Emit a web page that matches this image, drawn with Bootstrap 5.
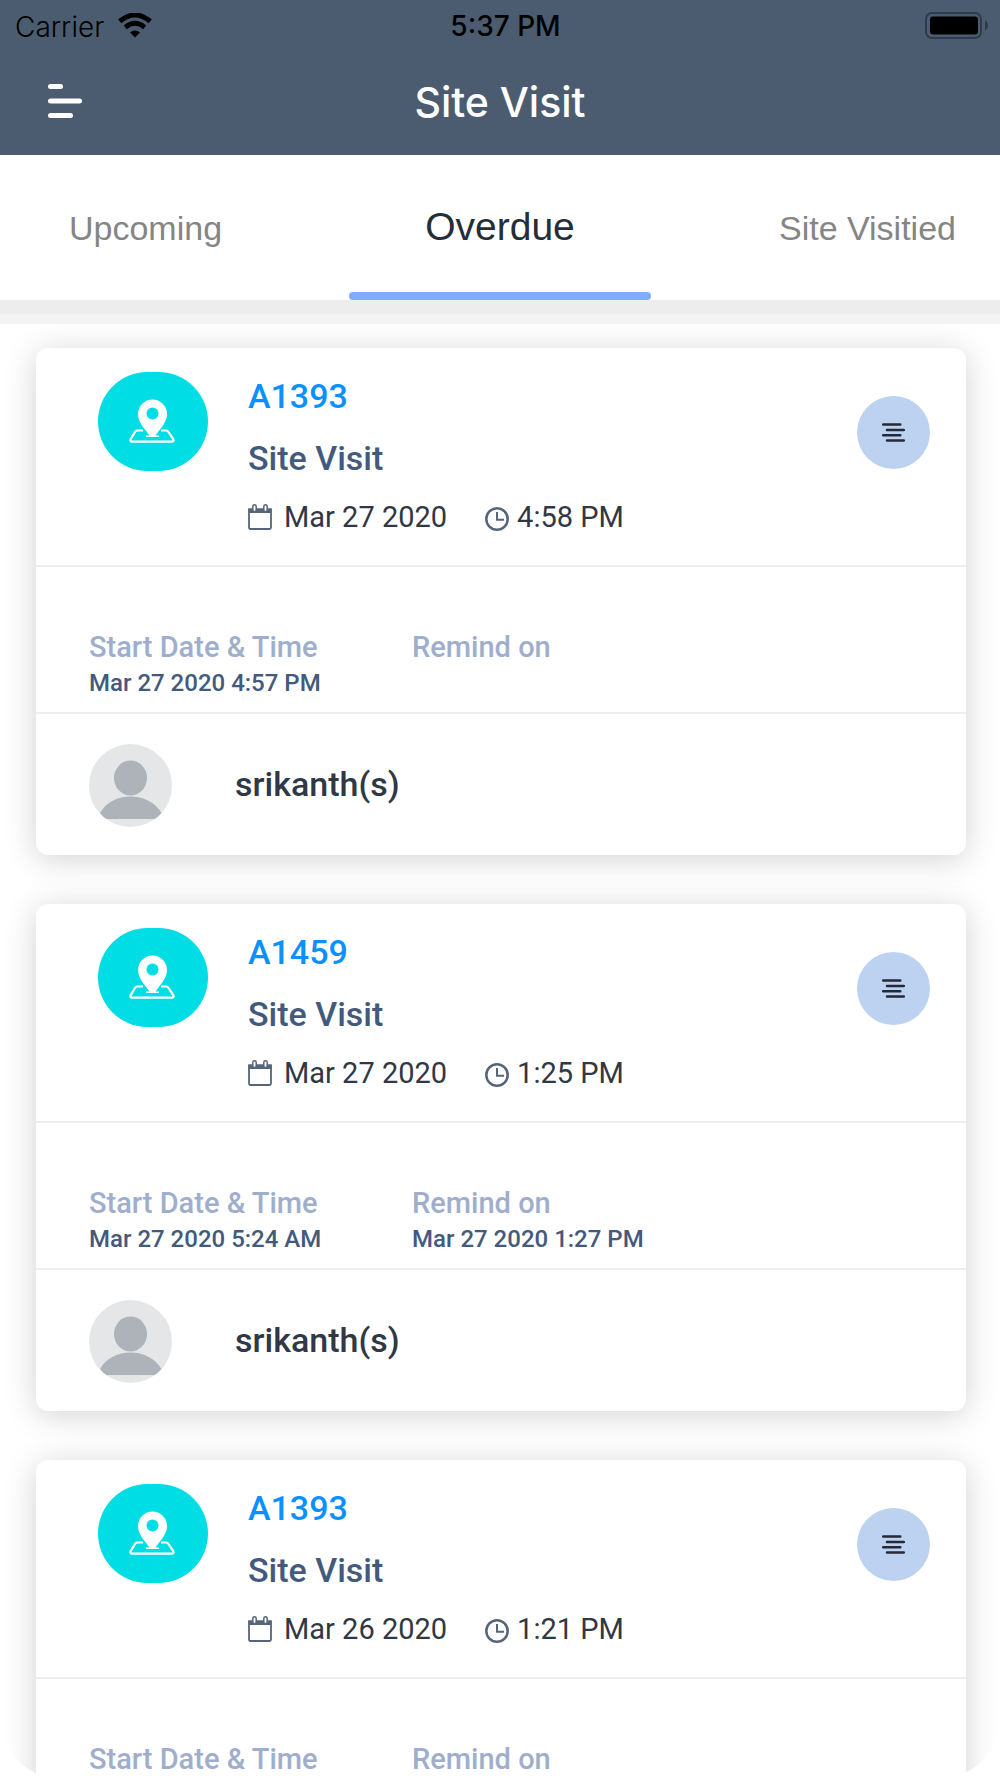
<!DOCTYPE html>
<html lang="en">
<head>
<meta charset="utf-8">
<meta name="viewport" content="width=device-width, initial-scale=1">
<title>Site Visit</title>
<link href="https://cdn.jsdelivr.net/npm/bootstrap@5.3.0/dist/css/bootstrap.min.css" rel="stylesheet">
<style>
body { font-family: Roboto, "Liberation Sans", sans-serif; background: #fff; color: #2f3844; }
.app-shell { border-radius: 0 0 60px 60px; }
.app-header { background: #4c5c70; font-family: Inter, "Liberation Sans", sans-serif; }
.status-bar { height: 50px; padding: 0 12px 0 15px; color: #000; font-size: 28px; line-height: 34px; }
.status-side { flex: 1 1 0; }
.carrier { font-weight: 300; }
.clock-text { font-weight: 500; padding: 2px 0 0 8px; }
.wifi { margin-left: 14px; }
.title-bar { height: 105px; padding: 0 48px 2px; }
.title-bar h1 { font-size: 41px; line-height: 48px; font-weight: 500; color: #fff; }
.title-side { flex: 1 1 0; }
.tab-strip { height: 145px; font-family: "Liberation Sans", Arial, sans-serif; }
.tab-link { border: 0; background: none; font-size: 34px; line-height: 40px; color: #858585; flex: 1 1 0; border-bottom: 8px solid transparent; padding: 8px 44px 0 69px; }
.tab-link.active { position: relative; flex: 0 0 302px; font-size: 39px; color: #252e38; padding: 6px 0 0; }
.tab-link.active::after { content: ""; position: absolute; left: 0; right: 0; bottom: -8px; height: 8px; border-radius: 4px; background: #80acff; }
.band { height: 24px; background: #f3f3f3; border-top: 14px solid #ededed; }
.visit-list { padding: 24px 34px 0 36px; gap: 49px; min-height: 0; }
.visit-card { flex: 0 0 auto; min-height: 507px; border: 0; border-radius: 12px; box-shadow: 0 4px 32px rgba(0,0,0,.18); }
.visit-top { padding: 24px 36px 31px 62px; border-bottom: 2px solid #eeeeee; }
.pin-badge { width: 110px; height: 99px; border-radius: 50px; background: #00dde4; margin-right: 40px; padding: 0 2px 2px 0; flex: none; }
.visit-info { gap: 22px; padding-top: 4px; }
.visit-code, .visit-kind { font-size: 34px; line-height: 40px; font-weight: 500; }
.visit-code { color: #0a90ff; text-decoration: none; }
.visit-kind { color: #435a7d; }
.visit-when { font-size: 29px; line-height: 34px; }
.when-date { gap: 12px; margin-right: 38px; }
.when-time { gap: 8px; }
.when-time svg { margin-top: 4px; }
.more-btn { width: 73px; height: 73px; border: 0; border-radius: 50%; background: #bdd2f0; margin-top: 24px; flex: none; }
.visit-dates { padding: 62px 53px 11px; border-bottom: 2px solid #eeeeee; }
.date-cell { width: 323px; line-height: 36px; }
.date-cell dt { font-size: 29px; font-weight: 500; color: #a0aecd; }
.date-cell dd { font-size: 24px; font-weight: 500; color: #435a7d; min-height: 36px; }
.visit-owner { padding: 30px 53px 28px; gap: 63px; font-size: 34px; line-height: 40px; font-weight: 500; }
.visit-owner span { padding-bottom: 4px; }
</style>
</head>
<body>
<svg class="d-none" aria-hidden="true">
  <symbol id="pin" viewBox="0 0 46 44">
    <path d="M14 31.500H8.500Q6.700 31.500 6 33L1.600 40.300Q.900 42.700 3.200 42.700H42.800Q45.100 42.700 44.400 40.300L39.500 33Q38.700 31.500 37 31.500H32" fill="none" stroke="#fff" stroke-width="2.200"/>
    <path d="M23.500 .5A14.500 14.500 0 0 0 9 15C9 23 15 29 20.500 36.500H17V38H30V36.500H26.500C32 29 38 23 38 15A14.500 14.500 0 0 0 23.500 .5Z" fill="#fff"/>
    <circle cx="23.500" cy="14.500" r="6" fill="#00dde4"/>
  </symbol>
  <symbol id="cal" viewBox="0 0 24 26">
    <path d="M1 5.500H23V23.500Q23 25 21.500 25H2.500Q1 25 1 23.500Z" fill="#fff" stroke="#56657a" stroke-width="1.800"/>
    <path d="M.500 4.500H23.500V9H.500Z" fill="#56657a"/>
    <rect x="4.800" y=".800" width="3.400" height="6.800" rx="1.700" fill="#fff" stroke="#56657a" stroke-width="1.500"/>
    <rect x="15.800" y=".800" width="3.400" height="6.800" rx="1.700" fill="#fff" stroke="#56657a" stroke-width="1.500"/>
  </symbol>
  <symbol id="clk" viewBox="0 0 24 24">
    <circle cx="12" cy="12" r="10.700" fill="none" stroke="#56657a" stroke-width="2.500"/>
    <path d="M12 5V12.700H19" fill="none" stroke="#56657a" stroke-width="2"/>
  </symbol>
  <symbol id="lines" viewBox="0 0 23 20">
    <path d="M1.200 1.500H18.300M5 7H21.800M1.200 12.300H18.300M5 17.500H21.800" stroke="#252838" stroke-width="2.500" stroke-linecap="round"/>
  </symbol>
  <symbol id="person" viewBox="0 0 83 83">
    <circle cx="41.500" cy="41.500" r="41.500" fill="#e4e6e8"/>
    <ellipse cx="41.500" cy="34" rx="16.500" ry="17.500" fill="#adb3b8"/>
    <path d="M11 69C17 58 29 52.500 41.500 52.500S66 58 72.500 69Q69 73 65.500 75H17.500Q14 73 11 69Z" fill="#adb3b8"/>
  </symbol>
</svg>

<div class="app-shell vh-100 d-flex flex-column overflow-hidden">
  <header class="app-header flex-shrink-0">
    <div class="status-bar d-flex align-items-center">
      <div class="status-side d-flex align-items-center">
        <span class="carrier pt-1">Carrier</span>
        <svg class="wifi" width="34" height="25" viewBox="0 0 34 25" aria-label="Wi-Fi">
          <path d="M1.700 8.300Q17-4.300 32.300 8.300" fill="none" stroke="#000" stroke-width="5"/>
          <path d="M7.300 14.300Q17 6.300 26.700 14.300" fill="none" stroke="#000" stroke-width="4.800"/>
          <path d="M12 19.500Q17 15.500 22 19.500L17 24.500Z"/>
        </svg>
      </div>
      <span class="clock-text">5:37 PM</span>
      <div class="status-side d-flex justify-content-end">
        <svg width="63" height="27" viewBox="0 0 63 27" aria-label="Battery full">
          <rect x="1" y="1" width="55" height="25" rx="6" fill="none" stroke="#303b49" stroke-width="2"/>
          <rect x="5" y="4.500" width="48" height="18" rx="3" fill="#000"/>
          <path d="M60 8.500Q63 10 63 13.500T60 18.500Z" fill="#303b49"/>
        </svg>
      </div>
    </div>
    <div class="title-bar d-flex align-items-center">
      <div class="title-side d-flex">
        <button type="button" class="btn p-0 border-0 d-flex" aria-label="Menu">
          <svg width="34" height="35" viewBox="0 0 34 35" fill="#fff">
            <rect width="15" height="5" rx="2.500"/><rect y="14.500" width="34" height="5" rx="2.500"/><rect y="29" width="25" height="5" rx="2.500"/>
          </svg>
        </button>
      </div>
      <h1 class="m-0">Site Visit</h1>
      <div class="title-side"></div>
    </div>
  </header>

  <nav class="tab-strip d-flex flex-shrink-0" aria-label="Visits">
    <button type="button" class="tab-link text-start">Upcoming</button>
    <button type="button" class="tab-link active text-center" aria-current="page">Overdue</button>
    <button type="button" class="tab-link text-end">Site Visitied</button>
  </nav>
  <div class="band flex-shrink-0"></div>

  <main class="visit-list d-flex flex-column flex-grow-1 overflow-hidden">
    <article class="card visit-card">
      <div class="visit-top d-flex align-items-start">
        <div class="pin-badge d-flex align-items-center justify-content-center"><svg width="46" height="44"><use href="#pin"/></svg></div>
        <div class="visit-info d-flex flex-column flex-grow-1">
          <a class="visit-code" href="#">A1393</a>
          <div class="visit-kind">Site Visit</div>
          <div class="visit-when d-flex">
            <span class="when-date d-flex align-items-center"><svg width="24" height="26"><use href="#cal"/></svg>Mar 27 2020</span>
            <span class="when-time d-flex align-items-center"><svg width="24" height="24"><use href="#clk"/></svg>4:58 PM</span>
          </div>
        </div>
        <button type="button" class="more-btn p-0 d-flex align-items-center justify-content-center" aria-label="Options"><svg width="23" height="20"><use href="#lines"/></svg></button>
      </div>
      <div class="visit-dates d-flex">
        <dl class="date-cell m-0"><dt>Start Date &amp; Time</dt><dd class="m-0">Mar 27 2020 4:57 PM</dd></dl>
        <dl class="date-cell m-0"><dt>Remind on</dt><dd class="m-0"></dd></dl>
      </div>
      <div class="visit-owner d-flex align-items-center"><svg width="83" height="83"><use href="#person"/></svg><span>srikanth(s)</span></div>
    </article>

    <article class="card visit-card">
      <div class="visit-top d-flex align-items-start">
        <div class="pin-badge d-flex align-items-center justify-content-center"><svg width="46" height="44"><use href="#pin"/></svg></div>
        <div class="visit-info d-flex flex-column flex-grow-1">
          <a class="visit-code" href="#">A1459</a>
          <div class="visit-kind">Site Visit</div>
          <div class="visit-when d-flex">
            <span class="when-date d-flex align-items-center"><svg width="24" height="26"><use href="#cal"/></svg>Mar 27 2020</span>
            <span class="when-time d-flex align-items-center"><svg width="24" height="24"><use href="#clk"/></svg>1:25 PM</span>
          </div>
        </div>
        <button type="button" class="more-btn p-0 d-flex align-items-center justify-content-center" aria-label="Options"><svg width="23" height="20"><use href="#lines"/></svg></button>
      </div>
      <div class="visit-dates d-flex">
        <dl class="date-cell m-0"><dt>Start Date &amp; Time</dt><dd class="m-0">Mar 27 2020 5:24 AM</dd></dl>
        <dl class="date-cell m-0"><dt>Remind on</dt><dd class="m-0">Mar 27 2020 1:27 PM</dd></dl>
      </div>
      <div class="visit-owner d-flex align-items-center"><svg width="83" height="83"><use href="#person"/></svg><span>srikanth(s)</span></div>
    </article>

    <article class="card visit-card">
      <div class="visit-top d-flex align-items-start">
        <div class="pin-badge d-flex align-items-center justify-content-center"><svg width="46" height="44"><use href="#pin"/></svg></div>
        <div class="visit-info d-flex flex-column flex-grow-1">
          <a class="visit-code" href="#">A1393</a>
          <div class="visit-kind">Site Visit</div>
          <div class="visit-when d-flex">
            <span class="when-date d-flex align-items-center"><svg width="24" height="26"><use href="#cal"/></svg>Mar 26 2020</span>
            <span class="when-time d-flex align-items-center"><svg width="24" height="24"><use href="#clk"/></svg>1:21 PM</span>
          </div>
        </div>
        <button type="button" class="more-btn p-0 d-flex align-items-center justify-content-center" aria-label="Options"><svg width="23" height="20"><use href="#lines"/></svg></button>
      </div>
      <div class="visit-dates d-flex">
        <dl class="date-cell m-0"><dt>Start Date &amp; Time</dt><dd class="m-0"></dd></dl>
        <dl class="date-cell m-0"><dt>Remind on</dt><dd class="m-0"></dd></dl>
      </div>
    </article>
  </main>
</div>
<script src="https://cdn.jsdelivr.net/npm/bootstrap@5.3.0/dist/js/bootstrap.bundle.min.js"></script>
</body>
</html>
